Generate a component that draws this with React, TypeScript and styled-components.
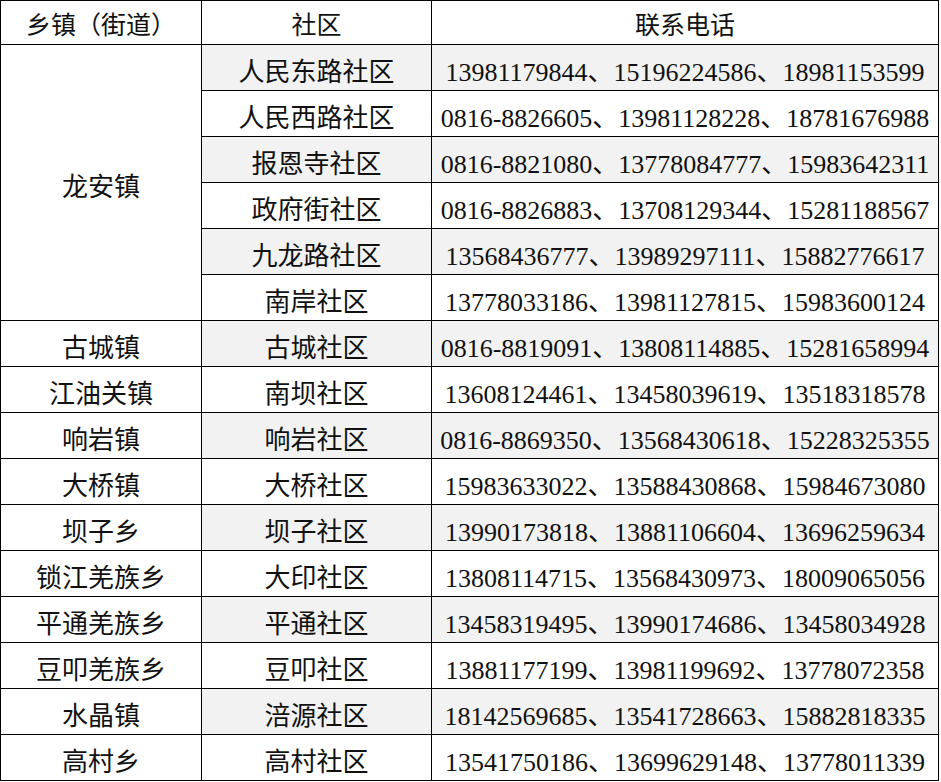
import styled, { createGlobalStyle } from "styled-components";

const GlobalStyle = createGlobalStyle`
  html, body {
    margin: 0;
    padding: 0;
    background: #fff;
  }
`;

type Row = {
  town?: string;
  span?: number;
  community: string;
  phones: string;
};

const rows: Row[] = [
  { town: "龙安镇", span: 6, community: "人民东路社区", phones: "13981179844、15196224586、18981153599" },
  { community: "人民西路社区", phones: "0816-8826605、13981128228、18781676988" },
  { community: "报恩寺社区", phones: "0816-8821080、13778084777、15983642311" },
  { community: "政府街社区", phones: "0816-8826883、13708129344、15281188567" },
  { community: "九龙路社区", phones: "13568436777、13989297111、15882776617" },
  { community: "南岸社区", phones: "13778033186、13981127815、15983600124" },
  { town: "古城镇", community: "古城社区", phones: "0816-8819091、13808114885、15281658994" },
  { town: "江油关镇", community: "南坝社区", phones: "13608124461、13458039619、13518318578" },
  { town: "响岩镇", community: "响岩社区", phones: "0816-8869350、13568430618、15228325355" },
  { town: "大桥镇", community: "大桥社区", phones: "15983633022、13588430868、15984673080" },
  { town: "坝子乡", community: "坝子社区", phones: "13990173818、13881106604、13696259634" },
  { town: "锁江羌族乡", community: "大印社区", phones: "13808114715、13568430973、18009065056" },
  { town: "平通羌族乡", community: "平通社区", phones: "13458319495、13990174686、13458034928" },
  { town: "豆叩羌族乡", community: "豆叩社区", phones: "13881177199、13981199692、13778072358" },
  { town: "水晶镇", community: "涪源社区", phones: "18142569685、13541728663、15882818335" },
  { town: "高村乡", community: "高村社区", phones: "13541750186、13699629148、13778011339" },
];

const Table = styled.table`
  border-collapse: collapse;
  table-layout: fixed;
  width: 938px;
  color: #111;
`;

const HeadCell = styled.th`
  height: 44px;
  padding: 0;
  box-sizing: border-box;
  border: 1.5px solid #000;
  font-family: "Noto Sans CJK SC", "Noto Sans", sans-serif;
  font-size: 25px;
  font-weight: 400;
  text-align: center;
  vertical-align: middle;
  background: #fff;
`;

const Cell = styled.td<{ $shaded?: boolean }>`
  height: 46px;
  padding: 4px 0 0;
  box-sizing: border-box;
  border: 1.5px solid #000;
  font-family: "Liberation Serif", "Noto Sans CJK SC", serif;
  font-size: 26px;
  text-align: center;
  vertical-align: middle;
  white-space: nowrap;
  background: ${(p) => (p.$shaded ? "#f2f2f2" : "#fff")};
`;

export default function App() {
  return (
    <>
      <GlobalStyle />
      <Table>
        <colgroup>
          <col style={{ width: 201 }} />
          <col style={{ width: 230 }} />
          <col style={{ width: 507 }} />
        </colgroup>
        <thead>
          <tr>
            <HeadCell>乡镇（街道）</HeadCell>
            <HeadCell>社区</HeadCell>
            <HeadCell>联系电话</HeadCell>
          </tr>
        </thead>
        <tbody>
          {rows.map((r, i) => {
            const shaded = i % 2 === 0;
            return (
              <tr key={r.community}>
                {r.town && <Cell rowSpan={r.span ?? 1}>{r.town}</Cell>}
                <Cell $shaded={shaded}>{r.community}</Cell>
                <Cell $shaded={shaded}>{r.phones}</Cell>
              </tr>
            );
          })}
        </tbody>
      </Table>
    </>
  );
}
